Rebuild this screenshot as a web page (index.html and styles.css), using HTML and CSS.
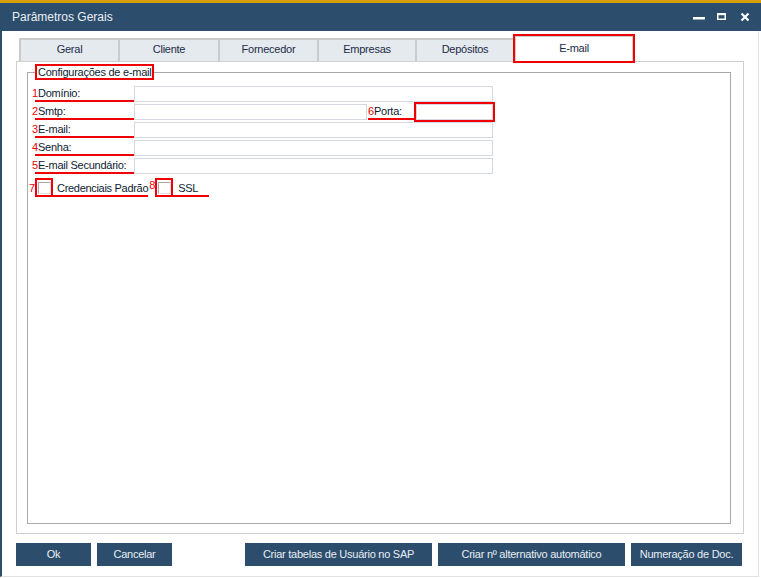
FILE: index.html
```html
<!DOCTYPE html>
<html lang="pt">
<head>
<meta charset="utf-8">
<title>Parâmetros Gerais</title>
<link rel="stylesheet" href="styles.css">
</head>
<body>
<div class="window">
  <div class="titlebar">
    <span class="title">Parâmetros Gerais</span>
    <svg class="controls" width="60" height="28" viewBox="0 0 60 28">
      <rect x="1" y="14" width="12" height="2.5" fill="#ffffff"/>
      <rect x="25.75" y="10.75" width="7.5" height="5.5" fill="none" stroke="#ffffff" stroke-width="1.5"/>
      <rect x="25" y="10" width="9" height="2.2" fill="#ffffff"/>
      <path d="M49.5 10.5 L56.5 17.5 M56.5 10.5 L49.5 17.5" stroke="#ffffff" stroke-width="2.2" fill="none"/>
    </svg>
  </div>
  <div class="content">
    <div class="tabs">
      <div class="tab t1">Geral</div>
      <div class="tab t2">Cliente</div>
      <div class="tab t3">Fornecedor</div>
      <div class="tab t4">Empresas</div>
      <div class="tab t5">Depósitos</div>
      <div class="tab active">E-mail</div>
    </div>
    <div class="panel">
      <fieldset class="group">
        <legend class="legend">Configurações de e-mail</legend>
        <div class="rows">
          <div class="row">
            <label class="lbl"><span class="num">1</span>Domínio:</label>
            <div class="inp w-full"></div>
          </div>
          <div class="row">
            <label class="lbl"><span class="num">2</span>Smtp:</label>
            <div class="inp w-smtp"></div>
            <label class="lbl porta"><span class="num">6</span>Porta:</label>
            <div class="inp w-porta"></div>
          </div>
          <div class="row">
            <label class="lbl"><span class="num">3</span>E-mail:</label>
            <div class="inp w-full"></div>
          </div>
          <div class="row">
            <label class="lbl"><span class="num">4</span>Senha:</label>
            <div class="inp w-full"></div>
          </div>
          <div class="row">
            <label class="lbl"><span class="num">5</span>E-mail Secundário:</label>
            <div class="inp w-full"></div>
          </div>
          <div class="chk-row">
            <span class="cnum">7</span>
            <div class="chk">
              <span class="box"><i></i></span>
              <span class="chk-text">Credenciais Padrão</span>
            </div>
            <span class="cnum c8">8</span>
            <div class="chk">
              <span class="box"><i></i></span>
              <span class="chk-text ssl">SSL</span>
            </div>
          </div>
        </div>
      </fieldset>
    </div>
    <div class="buttons">
      <div class="btn b-ok">Ok</div>
      <div class="btn b-cancel">Cancelar</div>
      <div class="btn b-tab">Criar tabelas de Usuário no SAP</div>
      <div class="btn b-alt">Criar nº alternativo automático</div>
      <div class="btn b-num">Numeração de Doc.</div>
    </div>
  </div>
</div>
</body>
</html>
```
FILE: styles.css
```css
* { box-sizing: border-box; }
html, body { margin: 0; padding: 0; background: #ffffff; }
body {
  font-family: "Liberation Sans", Arial, sans-serif;
  font-size: 11px;
  letter-spacing: -0.25px;
  color: #0e1c33;
}
.window {
  width: 761px;
  height: 578px;
  display: flex;
  flex-direction: column;
  background: #ffffff;
}
.titlebar {
  height: 31px;
  flex: none;
  border-top: 3px solid #d99f0b;
  background: #2c4d6b;
  display: flex;
  align-items: center;
}
.title {
  margin-left: 12px;
  font-size: 12px;
  letter-spacing: 0;
  color: #e9eff5;
  padding-bottom: 1px;
}
.controls {
  margin-left: auto;
  margin-right: 9px;
  align-self: flex-start;
}
.content {
  width: 759px;
  height: 546px;
  border-left: 2px solid #2c4d6b;
  border-right: 1px solid #e6e6e6;
  border-bottom: 1px solid #e2e2e2;
  display: flex;
  flex-direction: column;
}
.tabs {
  margin-top: 5px;
  margin-left: 17px;
  height: 25px;
  display: flex;
  align-items: flex-end;
}
.tab {
  height: 23px;
  background: #e5eaef;
  border-top: 2px solid #cbcbcb;
  border-left: 2px solid #cbcbcb;
  color: #1b2c48;
  text-align: center;
  line-height: 19px;
}
.t1 { width: 99px; }
.t2 { width: 100px; }
.t3 { width: 99px; }
.t4 { width: 98px; }
.t5 { width: 98px; }
.tab.active {
  width: 118px;
  height: 25px;
  margin-left: 2px;
  background: #ffffff;
  border: 1px solid #cfcfcf;
  border-bottom: none;
  padding-top: 2px;
  outline: 2px solid #f00000;
  position: relative;
  z-index: 1;
}
.panel {
  margin-left: 14px;
  width: 728px;
  height: 473px;
  border: 1px solid #cfcfcf;
  display: flex;
  flex-direction: column;
}
.group {
  margin: 2px 12px 9px 10px;
  padding: 0;
  border: 1px solid #a9a9a9;
  flex: 1;
  min-width: 0;
}
.legend {
  margin-left: 7px;
  padding: 0 1px;
  border: 2px solid #f00000;
  line-height: 12px;
  height: 16px;
  color: #0e1c33;
}
.rows {
  padding-top: 6px;
  display: flex;
  flex-direction: column;
  gap: 2px;
}
.row {
  display: flex;
  height: 16px;
}
.lbl {
  display: flex;
  align-items: flex-start;
  width: 99px;
  height: 16px;
  margin-left: 7px;
  border-bottom: 2px solid #f00000;
  line-height: 14px;
  white-space: nowrap;
}
.num {
  color: #f00000;
  margin-left: -3px;
  width: 6px;
  flex: none;
}
.lbl.porta {
  margin-left: 1px;
  width: 48px;
}
.lbl.porta .num { margin-left: 0; }
.inp {
  height: 16px;
  border: 1px solid #d3d9df;
  background: #ffffff;
}
.w-full { width: 359px; }
.w-smtp { width: 233px; }
.w-porta {
  width: 77px;
  outline: 2px solid #f00000;
}
.chk-row {
  margin-top: 2px;
  display: flex;
  align-items: flex-end;
  height: 19px;
}
.cnum {
  color: #f00000;
  width: 6px;
  margin-left: 1px;
  line-height: 14px;
  align-self: center;
}
.cnum.c8 {
  margin-left: 1px;
  align-self: flex-start;
  line-height: 12px;
  margin-top: 1px;
}
.chk {
  display: flex;
  align-items: flex-end;
  height: 19px;
  box-shadow: inset 0 -2px 0 #f00000;
}
.box {
  width: 18px;
  height: 19px;
  border: 2px solid #f00000;
  display: flex;
  align-items: center;
  justify-content: center;
  flex: none;
}
.box i {
  display: block;
  width: 13px;
  height: 12px;
  border: 1px solid #a9a9a9;
  border-right-color: #e2e2e2;
  border-bottom-color: #e2e2e2;
  background: #ffffff;
}
.chk-text {
  padding-left: 4px;
  line-height: 14px;
  margin-bottom: 2px;
  white-space: nowrap;
  letter-spacing: -0.3px;
}
.chk-text.ssl { padding-left: 5px; padding-right: 11px; }
.buttons {
  margin-top: 9px;
  margin-left: 14px;
  margin-right: 16px;
  display: flex;
  gap: 6px;
}
.btn {
  height: 23px;
  background: #2c4d6b;
  color: #e8eef5;
  text-align: center;
  line-height: 23px;
  white-space: nowrap;
}
.b-ok { width: 75px; }
.b-cancel { width: 75px; }
.b-tab { width: 187px; margin-left: auto; }
.b-alt { width: 187px; }
.b-num { width: 111px; }
```
